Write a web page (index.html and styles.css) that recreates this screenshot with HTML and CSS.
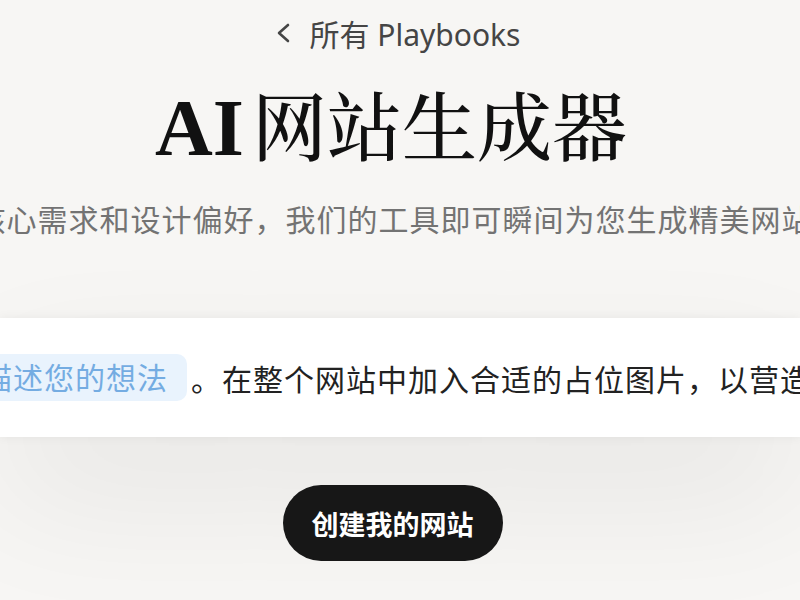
FILE: index.html
```html
<!DOCTYPE html>
<html lang="zh-CN">
<head>
<meta charset="utf-8">
<title>AI网站生成器</title>
<link rel="stylesheet" href="styles.css">
</head>
<body>
<main class="page">
  <a class="back" href="#">
    <svg class="chev" viewBox="0 0 15 20" width="15" height="20" aria-hidden="true"><path d="M12 2 L3 10 L12 18" fill="none" stroke="#454545" stroke-width="2.6" stroke-linecap="round" stroke-linejoin="round"/></svg>
    <span>所有 Playbooks</span>
  </a>
  <h1 class="title"><span class="latin">AI</span>网站生成器</h1>
  <p class="subtitle"><span>告诉我们您的核心需求和设计偏好，我们的工具即可瞬间为您生成精美网站，无需编码。</span></p>
  <section class="card">
    <span>创建一个网站：</span><span class="pill">描述您的想法</span><span>。在整个网站中加入合适的占位图片，以营造逼真的视觉效果。</span>
  </section>
  <button class="cta" type="button">创建我的网站</button>
</main>
</body>
</html>
```
FILE: styles.css
```css
html, body {
  margin: 0;
  padding: 0;
}
body {
  width: 800px;
  height: 600px;
  overflow: hidden;
  background: #f7f6f4;
  font-family: "Noto Sans", "Noto Sans CJK SC", sans-serif;
}
.page {
  display: flex;
  flex-direction: column;
  align-items: center;
  width: 800px;
}
.back {
  margin-top: 13px;
  padding-right: 4px;
  height: 40px;
  display: flex;
  align-items: center;
  gap: 19px;
  font-size: 30px;
  color: #454545;
  text-decoration: none;
  white-space: nowrap;
}
.chev {
  display: block;
}
.title {
  margin: 30px 0 0;
  padding-right: 18px;
  font-size: 75px;
  line-height: 90px;
  font-family: "Liberation Serif", "Noto Serif CJK SC", "Noto Sans CJK SC", serif;
  font-weight: 500;
  color: #111;
  white-space: nowrap;
}
.title .latin {
  font-size: 80px;
  font-weight: 700;
  margin-right: 8px;
}
.subtitle {
  box-sizing: border-box;
  margin: 25px 0 0;
  padding-right: 12px;
  width: 800px;
  display: flex;
  justify-content: center;
  font-size: 30px;
  letter-spacing: 1px;
  line-height: 40px;
  color: #737373;
  white-space: nowrap;
}
.card {
  margin-top: 78px;
  width: 800px;
  height: 119px;
  background: #fff;
  display: flex;
  align-items: center;
  justify-content: center;
  white-space: nowrap;
  font-size: 30px;
  letter-spacing: 1px;
  color: #222;
  box-shadow: 0 0 10px rgba(0, 0, 0, 0.06), 0 60px 140px rgba(0, 0, 0, 0.07);
}
.pill {
  flex: none;
  background: #e9f3fd;
  color: #74ace2;
  border-radius: 10px;
  padding: 0 19px 0 20px;
  height: 47px;
  line-height: 47px;
  margin: 0 4px;
}
.card > span {
  flex: none;
}
.cta {
  margin-top: 48px;
  margin-right: 15px;
  height: 76px;
  padding: 0 29px;
  border: none;
  border-radius: 38px;
  background: #171717;
  color: #fff;
  font-family: "Noto Sans CJK SC", sans-serif;
  font-size: 27px;
  font-weight: 700;
  cursor: pointer;
}
```
